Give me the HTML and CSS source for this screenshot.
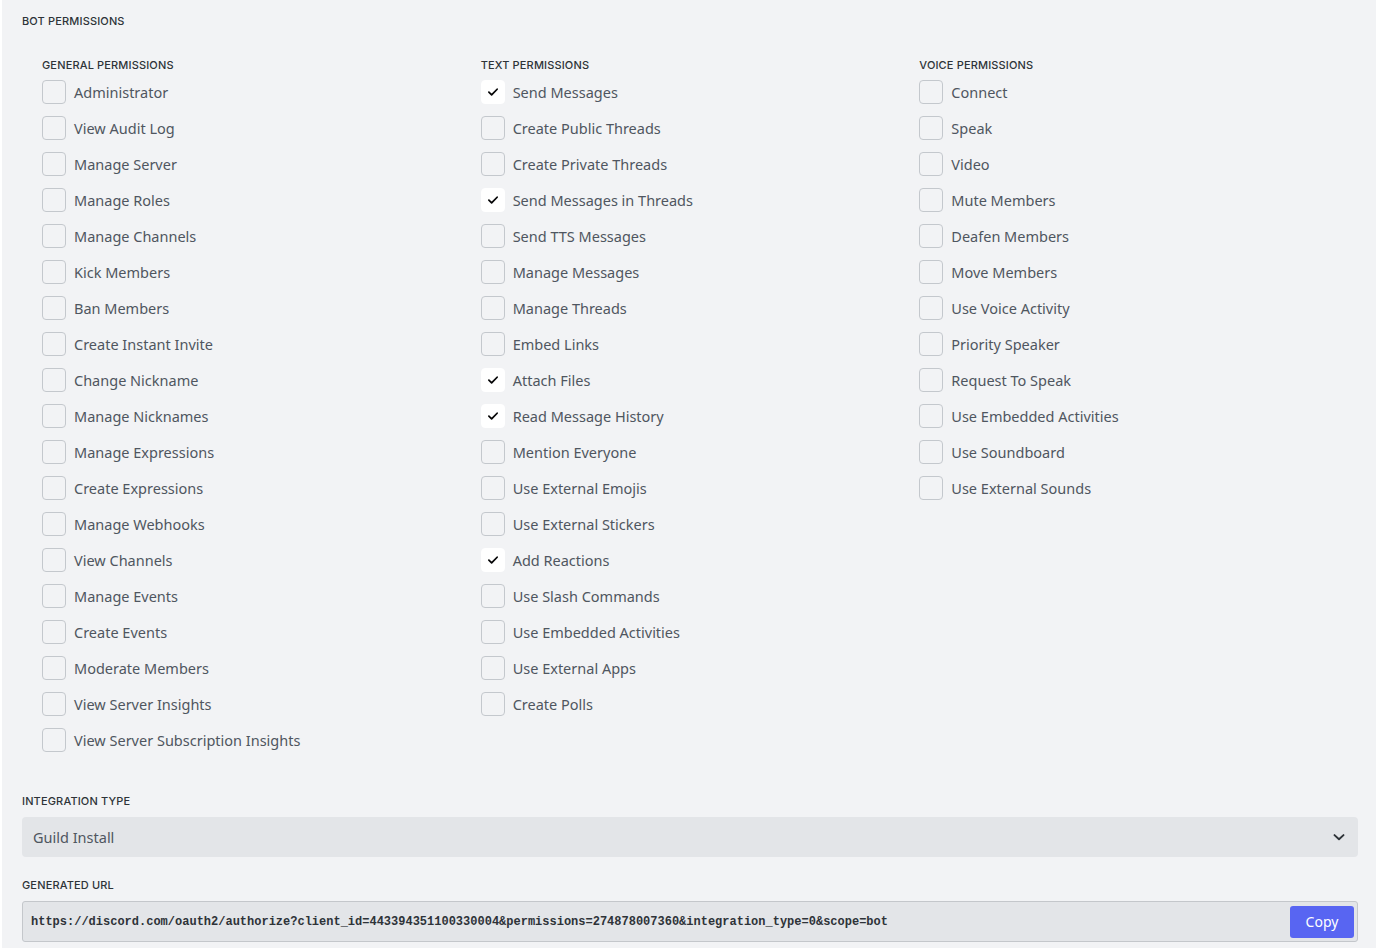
FILE: index.html
```html
<!DOCTYPE html>
<html>
<head>
<meta charset="utf-8">
<link rel="stylesheet" href="styles.css">
</head>
<body>
<div class="panel">
  <h2 class="section-title">BOT PERMISSIONS</h2>
  <div class="perm-grid">
    <div class="perm-col">
      <h3 class="col-title">GENERAL PERMISSIONS</h3>
      <label class="perm"><span class="box"></span><span class="txt">Administrator</span></label>
      <label class="perm"><span class="box"></span><span class="txt">View Audit Log</span></label>
      <label class="perm"><span class="box"></span><span class="txt">Manage Server</span></label>
      <label class="perm"><span class="box"></span><span class="txt">Manage Roles</span></label>
      <label class="perm"><span class="box"></span><span class="txt">Manage Channels</span></label>
      <label class="perm"><span class="box"></span><span class="txt">Kick Members</span></label>
      <label class="perm"><span class="box"></span><span class="txt">Ban Members</span></label>
      <label class="perm"><span class="box"></span><span class="txt">Create Instant Invite</span></label>
      <label class="perm"><span class="box"></span><span class="txt">Change Nickname</span></label>
      <label class="perm"><span class="box"></span><span class="txt">Manage Nicknames</span></label>
      <label class="perm"><span class="box"></span><span class="txt">Manage Expressions</span></label>
      <label class="perm"><span class="box"></span><span class="txt">Create Expressions</span></label>
      <label class="perm"><span class="box"></span><span class="txt">Manage Webhooks</span></label>
      <label class="perm"><span class="box"></span><span class="txt">View Channels</span></label>
      <label class="perm"><span class="box"></span><span class="txt">Manage Events</span></label>
      <label class="perm"><span class="box"></span><span class="txt">Create Events</span></label>
      <label class="perm"><span class="box"></span><span class="txt">Moderate Members</span></label>
      <label class="perm"><span class="box"></span><span class="txt">View Server Insights</span></label>
      <label class="perm"><span class="box"></span><span class="txt">View Server Subscription Insights</span></label>
    </div>
    <div class="perm-col">
      <h3 class="col-title">TEXT PERMISSIONS</h3>
      <label class="perm"><span class="box checked"><svg viewBox="0 0 24 24" width="24" height="24"><path d="M7.5 12.2l3 3 6-6.2" fill="none" stroke="#060607" stroke-width="1.9" stroke-linecap="round" stroke-linejoin="round"/></svg></span><span class="txt">Send Messages</span></label>
      <label class="perm"><span class="box"></span><span class="txt">Create Public Threads</span></label>
      <label class="perm"><span class="box"></span><span class="txt">Create Private Threads</span></label>
      <label class="perm"><span class="box checked"><svg viewBox="0 0 24 24" width="24" height="24"><path d="M7.5 12.2l3 3 6-6.2" fill="none" stroke="#060607" stroke-width="1.9" stroke-linecap="round" stroke-linejoin="round"/></svg></span><span class="txt">Send Messages in Threads</span></label>
      <label class="perm"><span class="box"></span><span class="txt">Send TTS Messages</span></label>
      <label class="perm"><span class="box"></span><span class="txt">Manage Messages</span></label>
      <label class="perm"><span class="box"></span><span class="txt">Manage Threads</span></label>
      <label class="perm"><span class="box"></span><span class="txt">Embed Links</span></label>
      <label class="perm"><span class="box checked"><svg viewBox="0 0 24 24" width="24" height="24"><path d="M7.5 12.2l3 3 6-6.2" fill="none" stroke="#060607" stroke-width="1.9" stroke-linecap="round" stroke-linejoin="round"/></svg></span><span class="txt">Attach Files</span></label>
      <label class="perm"><span class="box checked"><svg viewBox="0 0 24 24" width="24" height="24"><path d="M7.5 12.2l3 3 6-6.2" fill="none" stroke="#060607" stroke-width="1.9" stroke-linecap="round" stroke-linejoin="round"/></svg></span><span class="txt">Read Message History</span></label>
      <label class="perm"><span class="box"></span><span class="txt">Mention Everyone</span></label>
      <label class="perm"><span class="box"></span><span class="txt">Use External Emojis</span></label>
      <label class="perm"><span class="box"></span><span class="txt">Use External Stickers</span></label>
      <label class="perm"><span class="box checked"><svg viewBox="0 0 24 24" width="24" height="24"><path d="M7.5 12.2l3 3 6-6.2" fill="none" stroke="#060607" stroke-width="1.9" stroke-linecap="round" stroke-linejoin="round"/></svg></span><span class="txt">Add Reactions</span></label>
      <label class="perm"><span class="box"></span><span class="txt">Use Slash Commands</span></label>
      <label class="perm"><span class="box"></span><span class="txt">Use Embedded Activities</span></label>
      <label class="perm"><span class="box"></span><span class="txt">Use External Apps</span></label>
      <label class="perm"><span class="box"></span><span class="txt">Create Polls</span></label>
    </div>
    <div class="perm-col">
      <h3 class="col-title">VOICE PERMISSIONS</h3>
      <label class="perm"><span class="box"></span><span class="txt">Connect</span></label>
      <label class="perm"><span class="box"></span><span class="txt">Speak</span></label>
      <label class="perm"><span class="box"></span><span class="txt">Video</span></label>
      <label class="perm"><span class="box"></span><span class="txt">Mute Members</span></label>
      <label class="perm"><span class="box"></span><span class="txt">Deafen Members</span></label>
      <label class="perm"><span class="box"></span><span class="txt">Move Members</span></label>
      <label class="perm"><span class="box"></span><span class="txt">Use Voice Activity</span></label>
      <label class="perm"><span class="box"></span><span class="txt">Priority Speaker</span></label>
      <label class="perm"><span class="box"></span><span class="txt">Request To Speak</span></label>
      <label class="perm"><span class="box"></span><span class="txt">Use Embedded Activities</span></label>
      <label class="perm"><span class="box"></span><span class="txt">Use Soundboard</span></label>
      <label class="perm"><span class="box"></span><span class="txt">Use External Sounds</span></label>
    </div>
  </div>

  <h2 class="section-title integ">INTEGRATION TYPE</h2>
  <div class="select">
    <span class="select-value">Guild Install</span>
    <svg class="chev" viewBox="0 0 24 24" width="18" height="18"><path d="M6 9.5l6 5.5 6-5.5" fill="none" stroke="#2e3338" stroke-width="2.6" stroke-linecap="round" stroke-linejoin="round"/></svg>
  </div>

  <h2 class="section-title url-title">GENERATED URL</h2>
  <div class="url-box">
    <span class="url">https://discord.com/oauth2/authorize?client_id=443394351100330004&amp;permissions=274878007360&amp;integration_type=0&amp;scope=bot</span>
    <button class="copy">Copy</button>
  </div>
</div>
</body>
</html>
```

FILE: styles.css
```css
html, body {
  margin: 0;
  padding: 0;
  background: #ffffff;
}

body {
  height: 948px;
  overflow: hidden;
}

.panel {
  margin-left: 2px;
  background: #f2f3f5;
  min-height: 948px;
  padding: 13px 18px 0 20px;
  box-sizing: border-box;
  font-family: "Noto Sans", "Open Sans", sans-serif;
}

.section-title {
  margin: 0;
  font-family: Inter, "Noto Sans", sans-serif;
  font-size: 11px;
  line-height: 16px;
  font-weight: 500;
  color: #2e3338;
  letter-spacing: 0.15px;
}

.perm-grid {
  display: grid;
  grid-template-columns: repeat(3, 1fr);
  padding-left: 20px;
  margin-top: 28px;
}

.perm-col {
  display: flex;
  flex-direction: column;
}

.col-title {
  margin: 0 0 1px 0;
  font-family: Inter, "Noto Sans", sans-serif;
  font-size: 11px;
  line-height: 16px;
  font-weight: 500;
  color: #2e3338;
  letter-spacing: 0.15px;
}

.perm {
  display: flex;
  align-items: center;
  height: 36px;
  gap: 8px;
}

.box {
  width: 24px;
  height: 24px;
  box-sizing: border-box;
  border: 1px solid #c4c8cd;
  border-radius: 4px;
  flex: none;
  display: flex;
  align-items: center;
  justify-content: center;
}

.box.checked {
  background: #ffffff;
  border-color: #ffffff;
}

.box svg {
  display: block;
}

.txt {
  font-size: 14.5px;
  line-height: 20px;
  color: #4f5660;
}

.integ {
  margin-top: 35px;
}

.select {
  margin-top: 8px;
  height: 40px;
  background: #e3e5e8;
  border-radius: 4px;
  display: flex;
  align-items: center;
  justify-content: space-between;
  padding: 0 10px 0 11px;
}

.select-value {
  font-size: 14.5px;
  color: #4f5660;
}

.chev {
  display: block;
}

.url-title {
  margin-top: 20px;
}

.url-box {
  margin-top: 8px;
  height: 41px;
  box-sizing: border-box;
  background: #e3e5e8;
  border: 1px solid #c4c7cb;
  border-radius: 3px;
  display: flex;
  align-items: center;
  justify-content: space-between;
  padding: 0 3px 0 8px;
}

.url {
  font-family: "Liberation Mono", "DejaVu Sans Mono", monospace;
  font-weight: 700;
  font-size: 12px;
  color: #2e3338;
}

.copy {
  width: 64px;
  height: 32px;
  border: none;
  border-radius: 3px;
  background: #5865f2;
  color: #ffffff;
  font-family: "Noto Sans", sans-serif;
  font-size: 14px;
  padding: 0;
}
```
